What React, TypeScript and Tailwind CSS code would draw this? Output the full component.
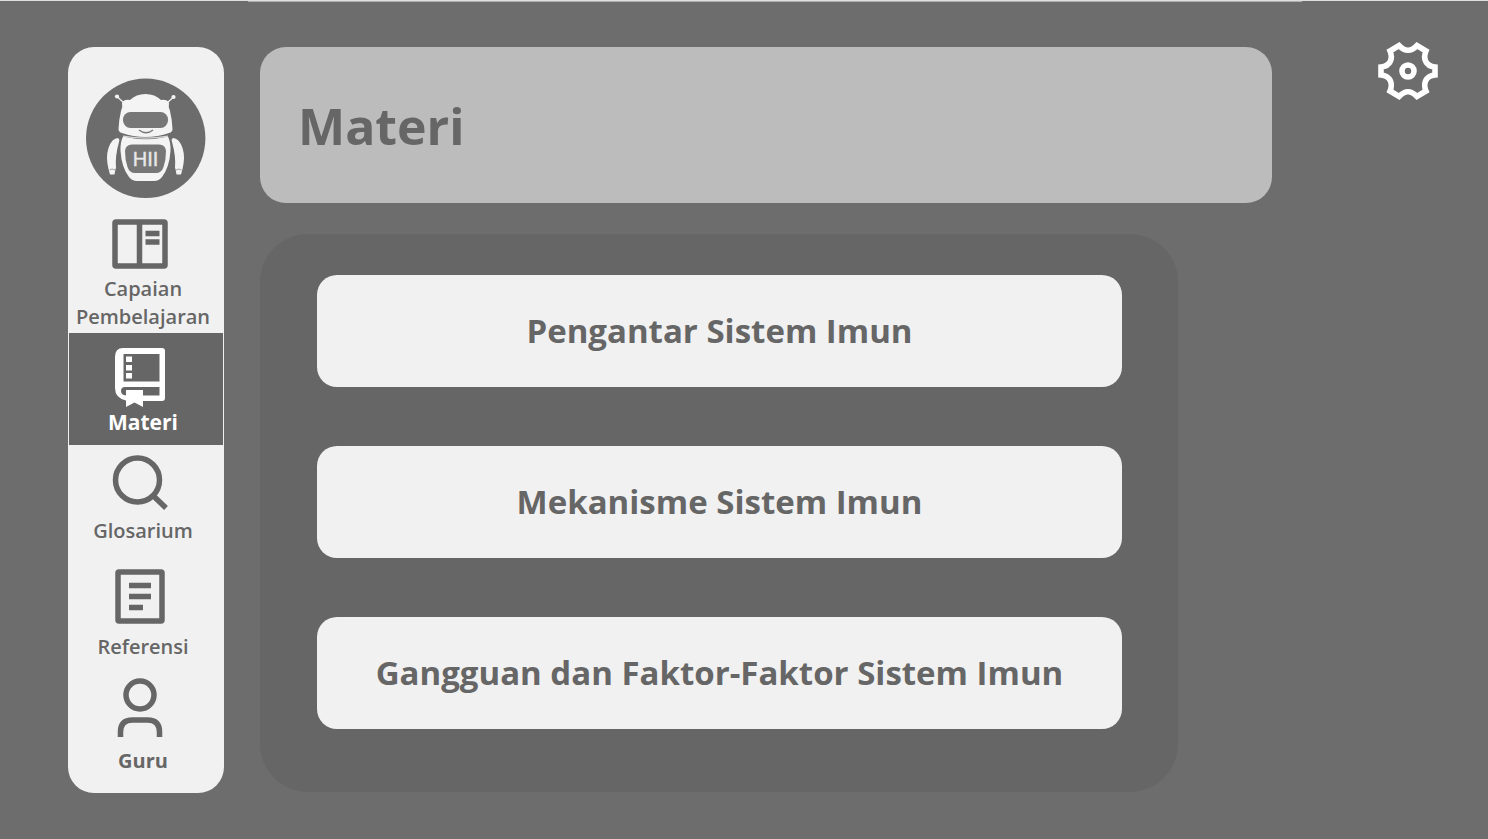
import React from "react";

function RobotLogo() {
  return (
    <svg viewBox="0 0 120 120" className="size-[120px]" role="img" aria-label="HII">
      <circle cx="59.700" cy="60.300" r="59.700" fill="#6c6c6c" />
      <g fill="#f4f4f4">
        <circle cx="31" cy="18.500" r="2.100" />
        <circle cx="87.500" cy="19" r="2.100" />
        <path d="M31 18.500L38 25M87.500 19L81 25" stroke="#f4f4f4" strokeWidth="1.200" />
        <path d="M36 25Q38 21 44 22Q50 16 59.500 16Q69 16 75 22Q81 21 83 25Q82 29 84 33Q86 41 86.500 51Q86.500 54 83 55Q72 59 59.500 59Q47 59 36 55Q32.500 54 32.500 51Q33 41 35 33Q37 29 36 25Z" />
        <path d="M37 58.500Q60 64 82 58.500Q85 65 84.500 73Q83.500 89 76 99Q73 103 68 103H51Q46 103 43 99Q35.500 89 34.500 73Q34 65 37 58.500Z" />
        <path d="M32 60Q34 61 33 64Q29 78 30 90L29.500 91L28.500 96.500H24L22.500 91Q19.500 79 22.500 70Q26 60 32 60Z" />
        <path d="M87 60Q85 61 86 64Q90 78 89 90L89.500 91L90.500 96.500H95L96.500 91Q99.500 79 96.500 70Q93 60 87 60Z" />
      </g>
      <path d="M23.500 92Q26 90 29 92M90 92Q93 90 95.500 92" fill="none" stroke="#8a8a8a" strokeWidth="0.800" />
      <rect x="37" y="34" width="45" height="16" rx="7.500" fill="#777" />
      <path d="M53 52Q60 57.500 67 52" fill="none" stroke="#777" strokeWidth="1.500" />
      <path d="M37 58.200Q59.500 62 82 58.200" fill="none" stroke="#d6d6d6" strokeWidth="1.200" />
      <path d="M46 66.500H73Q79.500 66.500 80 73Q80 82 77.500 89Q75.500 95 70 95H49Q43.500 95 41.500 89Q39 82 39 73Q39.500 66.500 46 66.500Z" fill="#777" />
      <text x="59.500" y="88" textAnchor="middle" fontSize="20" fill="#e8e8e8" stroke="#e8e8e8" strokeWidth="0.400" className="font-['Liberation_Sans',sans-serif]">
        HII
      </text>
    </svg>
  );
}

function BoardIcon() {
  return (
    <svg viewBox="0 0 60 60" className="size-[60px]" fill="none" stroke="#666" aria-hidden="true">
      <rect x="5" y="8" width="50" height="44" rx="1" strokeWidth="5.500" />
      <path d="M29.500 8V52" strokeWidth="5.500" />
      <path d="M35.500 19.500H49.500M35.500 28H49.500" strokeWidth="5.500" />
    </svg>
  );
}

function BookIcon() {
  return (
    <svg viewBox="0 0 60 60" className="size-[60px]" aria-hidden="true">
      <path
        fillRule="evenodd"
        fill="#fff"
        d="M13 0H52Q55 0 55 3V50Q55 53 52 53H33V59L24.500 54.500L16 59V52.500Q5 50 5 40V9Q5 0 13 0ZM13.500 6H49.500V33.500H13.500ZM15 39H49.500V47.500H33V42H16V47.500Q11 47 11 43Q11 39 15 39Z"
      />
      <path d="M16 8.500H22V14H16ZM16 17H22V22.500H16ZM16 25H22V30.500H16Z" fill="#fff" />
    </svg>
  );
}

function SearchIcon() {
  return (
    <svg viewBox="0 0 60 60" className="size-[60px]" fill="none" stroke="#666" strokeWidth="5.500" aria-hidden="true">
      <circle cx="27.500" cy="27" r="22" />
      <path d="M43.500 43L56 55" />
    </svg>
  );
}

function DocumentIcon() {
  return (
    <svg viewBox="0 0 60 60" className="size-[60px]" fill="none" stroke="#666" strokeWidth="5.500" aria-hidden="true">
      <rect x="8" y="5" width="44" height="49" rx="1" />
      <path d="M19 18.500H41M19 29.500H41M19 40.500H33" />
    </svg>
  );
}

function PersonIcon() {
  return (
    <svg viewBox="0 0 60 60" className="size-[60px]" fill="none" stroke="#666" strokeWidth="5.500" aria-hidden="true">
      <circle cx="30" cy="17" r="14" />
      <path d="M10.500 59V54Q10.500 42 22.500 42H37.500Q49.500 42 49.500 54V59" />
    </svg>
  );
}

const navigation = [
  { label: "Capaian Pembelajaran", icon: <BoardIcon />, box: "h-[119px] gap-px text-[20px] font-semibold" },
  { label: "Materi", icon: <BookIcon />, box: "mx-px h-[112px] bg-[#666] pt-[15px] text-[21px] font-bold text-white", active: true },
  { label: "Glosarium", icon: <SearchIcon />, box: "h-[116px] gap-1 pt-2 text-[20px] font-semibold" },
  { label: "Referensi", icon: <DocumentIcon />, box: "h-[115px] gap-[6px] pt-[6px] text-[20px] font-semibold" },
  { label: "Guru", icon: <PersonIcon />, box: "h-[117px] gap-[9px] pt-[2px] text-[20px] font-bold" },
];

const topics = ["Pengantar Sistem Imun", "Mekanisme Sistem Imun", "Gangguan dan Faktor-Faktor Sistem Imun"];

export default function App() {
  return (
    <div className="min-h-screen bg-[#6d6d6d] font-['Open_Sans','Noto_Sans',sans-serif] text-[#666]">
      <div className="flex h-[47px] flex-col border-t border-[#dedede]">
        <div className="mr-[186px] ml-[248px] h-px bg-[#b0b0b0]" />
      </div>
      <div className="flex items-start pr-[50px] pb-[46px] pl-[68px]">
        <aside className="w-[156px] shrink-0 overflow-hidden rounded-[26px] bg-[#f1f1f1] pt-[31px]">
          <div className="flex justify-center">
            <RobotLogo />
          </div>
          <nav className="mt-4">
            {navigation.map((item) => (
              <a
                key={item.label}
                href="#"
                aria-current={item.active ? "page" : undefined}
                className={`flex flex-col items-center pr-[6px] text-center leading-7 ${item.box}`}
              >
                <span className="mr-[6px]">{item.icon}</span>
                <span>{item.label}</span>
              </a>
            ))}
          </nav>
        </aside>
        <main className="ml-9 min-w-0 flex-1">
          <header className="mr-[58px] flex h-[156px] items-center rounded-[26px] bg-[#bcbcbc] px-[38px] pt-[2px]">
            <h1 className="text-[50px] leading-[60px] font-bold">Materi</h1>
          </header>
          <section className="mt-[31px] mr-[152px] flex flex-col gap-[59px] rounded-[48px] bg-[#666] pt-[41px] pr-14 pb-[63px] pl-[57px]">
            {topics.map((topic) => (
              <button key={topic} type="button" className="h-[112px] w-full rounded-[20px] bg-[#f1f1f1] text-[33px] leading-[44px] font-bold">
                {topic}
              </button>
            ))}
          </section>
        </main>
        <button type="button" aria-label="Pengaturan" className="-mt-[6px] ml-[48px] shrink-0">
          <svg viewBox="0 0 60 60" className="size-[60px]" fill="none" stroke="#fff" strokeWidth="5.600" aria-hidden="true">
            <path d="M21 4.500Q30 14 39 4.500L48 10C45 17 47 25 57 26V34C47 35 45 43 48 50L39 55.500Q30 46 21 55.500L12 50C15 43 13 35 3 34V26C13 25 15 17 12 10Z" />
            <circle cx="30" cy="30" r="6" />
          </svg>
        </button>
      </div>
    </div>
  );
}
